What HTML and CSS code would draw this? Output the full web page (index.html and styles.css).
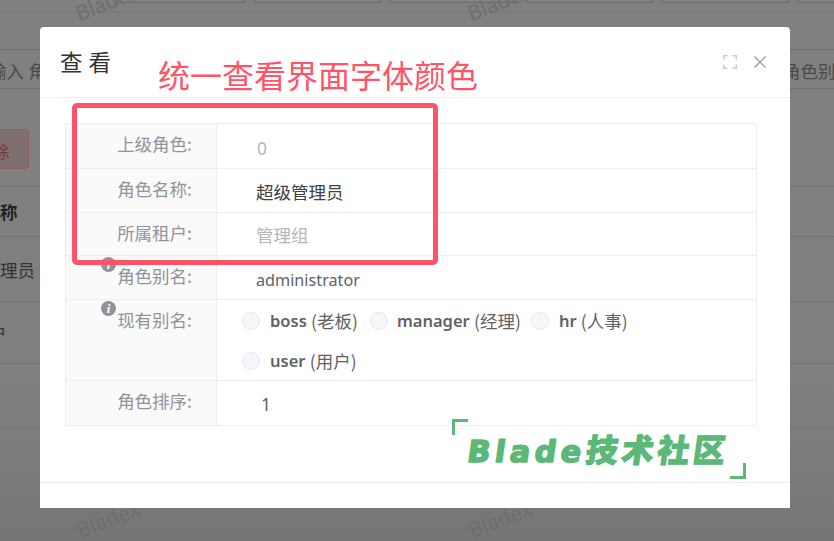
FILE: index.html
```html
<!DOCTYPE html>
<html lang="zh-CN">
<head>
    <meta charset="UTF-8">
    <meta name="viewport" content="width=device-width, initial-scale=1.0">
    <title>查看</title>
    <link rel="stylesheet" href="styles.css">
</head>
<body>
    <div class="page">
        <!-- 背景列表页 -->
        <div class="bg">
            <div class="bg-tabs">
                <span></span><span></span><span></span><span></span><span></span><span></span>
            </div>
            <div class="bg-search">
                <span class="bg-search-left">输入 角</span>
                <span class="bg-search-right">角色别名</span>
            </div>
            <div class="bg-btn">除</div>
            <div class="bg-row bg-head">称</div>
            <div class="bg-row bg-r1">理员</div>
            <div class="bg-row bg-r2">户</div>
            <div class="bg-row bg-r3"></div>
        </div>

        <span class="mark mark-1">Bladex</span>
        <span class="mark mark-2">Bladex</span>
        <span class="mark mark-3">Bladex</span>
        <span class="mark mark-4">Bladex</span>

        <div class="dialog">
            <div class="dialog-header">
                <span class="dialog-title">查 看</span>
                <div class="dialog-tools">
                    <svg class="icon-full" width="14" height="14" viewBox="0 0 14 14" fill="none" stroke="#c8cacf" stroke-width="1.5">
                        <path d="M.8 4.5V.8h3.7M9.5.8h3.7v3.7M13.2 9.5v3.7H9.5M4.5 13.2H.8V9.5"/>
                    </svg>
                    <svg class="icon-close" width="12" height="12" viewBox="0 0 12 12" fill="none" stroke="#909399" stroke-width="1.2">
                        <path d="M.5.5l11 11M11.5.5l-11 11"/>
                    </svg>
                </div>
            </div>
            <div class="dialog-body">
                <div class="desc">
                    <div class="row row-1">
                        <div class="label">上级角色:</div>
                        <div class="value muted val-zero">0</div>
                    </div>
                    <div class="row row-2">
                        <div class="label">角色名称:</div>
                        <div class="value dark">超级管理员</div>
                    </div>
                    <div class="row row-3">
                        <div class="label">所属租户:</div>
                        <div class="value muted">管理组</div>
                    </div>
                    <div class="row row-4">
                        <div class="label">角色别名:</div>
                        <div class="value val-latin">administrator</div>
                    </div>
                    <div class="row row-5">
                        <div class="label">现有别名:</div>
                        <div class="radios">
                            <label class="radio r-boss"><i></i>boss <span>(老板)</span></label>
                            <label class="radio r-manager"><i></i>manager <span>(经理)</span></label>
                            <label class="radio"><i></i>hr <span>(人事)</span></label>
                            <label class="radio r-user"><i></i>user <span>(用户)</span></label>
                        </div>
                    </div>
                    <div class="row row-6">
                        <div class="label">角色排序:</div>
                        <div class="value val-one">1</div>
                    </div>
                </div>
            </div>
            <div class="dialog-footer"></div>
        </div>

        <span class="tip tip-1">i</span>
        <span class="tip tip-2">i</span>

        <!-- 标注 -->
        <div class="note">统一查看界面字体颜色</div>
        <div class="note-box"></div>

        <div class="logo">
            <span class="logo-corner logo-tl"></span>
            <span class="logo-text"><b>Blade</b>技术社区</span>
            <span class="logo-corner logo-br"></span>
        </div>
    </div>
</body>
</html>
```

FILE: styles.css
```css
* { box-sizing: border-box; }
body { margin: 0; font-family: "Noto Sans", "Noto Sans CJK SC", sans-serif; }
.page { position: relative; width: 834px; height: 541px; overflow: hidden; background: linear-gradient(#808080, #7f7f7f 70%, #757777); }

.bg { color: #333; font-size: 17.5px; }
.bg-tabs { display: flex; gap: 8px; height: 12px; padding-left: 117px; border-bottom: 1px solid #767676; }
.bg-tabs span { flex: none; width: 128px; height: 3px; border: 1px solid #6a6a6a; border-top: 0; border-radius: 0 0 4px 4px; }
.bg-search { display: flex; justify-content: space-between; height: 40px; margin-top: 37px; padding-top: 4px; line-height: 34px; color: #4a4a4a; border-top: 1px solid #707070; border-bottom: 1px solid #707070; white-space: nowrap; }
.bg-search-left { margin-left: -11px; }
.bg-search-right { width: 51px; }
.bg-btn { width: 38px; height: 40px; margin: 40px 0 0 -9px; padding: 2px 19px 0 0; line-height: 38px; color: #7c3a3a; background: #7f6f6f; border: 1px solid #8f5d5d; border-radius: 4px; text-align: right; }
.bg-row { display: flex; align-items: center; border-bottom: 1px solid #727272; white-space: nowrap; }
.bg-head { height: 51px; margin-top: 17px; font-weight: 700; color: #222; border-top: 1px solid #727272; }
.bg-r1 { height: 65px; }
.bg-r2 { height: 62px; text-indent: -11px; }
.bg-r3 { height: 64px; }

.mark { position: absolute; font-size: 21px; color: #6e6e6e; transform: rotate(-21deg); white-space: nowrap; }
.mark-1 { left: 74px; top: -12px; }
.mark-2 { left: 466px; top: -12px; }
.mark-3 { left: 75px; top: 505px; }
.mark-4 { left: 467px; top: 505px; }

.dialog { position: absolute; left: 40px; top: 27px; display: flex; flex-direction: column; width: 750px; height: 481px; background: #fff; border-radius: 4px 4px 0 0; }
.dialog-header { display: flex; justify-content: space-between; align-items: flex-start; height: 71px; padding: 19px 24px 0 20px; border-bottom: 1px solid #ebeef5; }
.dialog-title { font-family: "Noto Sans CJK SC", sans-serif; font-size: 22.5px; line-height: 30px; color: #303133; word-spacing: 1px; }
.dialog-tools { display: flex; gap: 17px; margin-top: 9px; }
.icon-close { margin-top: 1px; }
.dialog-body { flex: 1; padding: 25px 33px 0 25px; }
.dialog-footer { height: 26px; border-top: 1px solid #ebeef5; }

.desc { border: 1px solid #ebeef5; border-bottom: 0; font-size: 17.5px; }
.row { display: flex; border-bottom: 1px solid #ebeef5; color: #606266; }
.row-1 { height: 45px; }
.row-2 { height: 44px; }
.row-3 { height: 43px; }
.row-4 { height: 44px; }
.row-5 { height: 81px; }
.row-6 { height: 45px; }
.label { flex: none; width: 151px; padding: 5px 24px 0 0; text-align: right; color: #909399; background: #fafafa; border-right: 1px solid #ebeef5; font-family: "Noto Sans CJK SC", sans-serif; line-height: 30px; }
.value { padding: 9px 0 0 39px; line-height: 30px; }
.row-2 .value { padding-top: 8px; }
.row-3 .value { padding-top: 7px; }
.row-4 .value { padding-top: 9px; }
.row-6 .value { padding-top: 8px; }
.muted { color: #b4b6bb; }
.dark { color: #3f4145; }
.val-zero { padding-left: 40px; }
.val-one { padding-left: 44px; }
.val-latin { font-size: 16.2px; }

.radios { display: flex; flex-wrap: wrap; align-content: flex-start; padding: 5px 0 0 25px; }
.radio { display: flex; align-items: center; height: 30px; margin-bottom: 10px; font-weight: 600; font-size: 16.5px; color: #606266; white-space: pre; }
.radio span { font-family: "Noto Sans CJK SC", sans-serif; font-size: 17.5px; font-weight: 400; }
.radio i { flex: none; width: 18px; height: 18px; margin: 1px 10px 0 0; background: #f5f7fa; border: 1px solid #e4e7ed; border-radius: 50%; }
.r-boss { margin-right: 12px; }
.r-manager { margin-right: 10px; }
.r-manager i { margin-right: 9px; }
.r-user { flex: 0 0 100%; }

.tip { position: absolute; left: 101px; width: 15px; height: 15px; border-radius: 50%; background: #909399; color: #fff; font: italic 700 13px/15px "Liberation Serif", serif; text-align: center; }
.tip-1 { top: 257px; }
.tip-2 { top: 301px; }

.note { position: absolute; left: 158px; top: 51px; font-family: "Noto Sans CJK SC", sans-serif; font-size: 32px; line-height: 46px; color: #ff5468; white-space: nowrap; }
.note-box { position: absolute; left: 72px; top: 103px; width: 366px; height: 162px; border: 5px solid #ff5468; border-radius: 5px; }

.logo { position: absolute; left: 452px; top: 419px; width: 294px; height: 60px; }
.logo-corner { position: absolute; width: 16px; height: 16px; border: 0 solid #5bb877; }
.logo-tl { left: 0; top: 0; border-width: 3px 0 0 3px; }
.logo-br { right: 0; bottom: 0; border-width: 0 3px 3px 0; }
.logo-text { position: absolute; left: 16px; top: 8px; font-family: "Noto Sans CJK SC", sans-serif; font-size: 32px; font-weight: 900; line-height: 42px; letter-spacing: 3.7px; color: #5bb877; -webkit-text-stroke: 1px #5bb877; transform: skewX(-8deg); white-space: nowrap; }
.logo-text b { font-family: "DejaVu Sans", sans-serif; font-size: 30px; letter-spacing: 4.6px; -webkit-text-stroke: 1.6px #5bb877; }
```
